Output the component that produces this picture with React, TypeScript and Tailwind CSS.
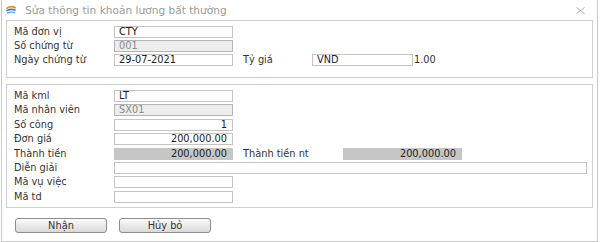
import React from 'react'

const font = { fontFamily: '"DejaVu Sans", Verdana, sans-serif' }

function Field({
  value,
  disabled,
  right,
  gray,
  className = 'w-[119px]',
}: {
  value?: string
  disabled?: boolean
  right?: boolean
  gray?: boolean
  className?: string
}) {
  const tone = gray
    ? 'bg-[#c6c6c6] border-[#c6c6c6] text-[#222]'
    : disabled
      ? 'bg-[#ededed] border-[#b4b4b4] text-[#8a8a8a]'
      : 'bg-white border-[#c4c4c4] text-[#222]'
  return (
    <div
      className={`h-[12px] border flex items-center pl-[4px] pr-[5px] text-[9.8px] leading-none ${tone} ${right ? 'justify-end' : ''} ${className}`}
    >
      {value}
    </div>
  )
}

function Row({ label, children }: { label: string; children: React.ReactNode }) {
  return (
    <div className="flex items-center h-[12px]">
      <span className="w-[100px] shrink-0 text-[9.8px] text-[#333] leading-none">{label}</span>
      {children}
    </div>
  )
}

function Side({ label, width, children }: { label: string; width: string; children: React.ReactNode }) {
  return (
    <>
      <span className="w-[10px] shrink-0" />
      <span className={`${width} shrink-0 text-[9.8px] text-[#333] leading-none`}>{label}</span>
      {children}
    </>
  )
}

function Btn({ label }: { label: string }) {
  return (
    <button className="w-[92px] h-[15px] rounded-[3px] border border-[#8e8e8e] bg-gradient-to-b from-[#fbfbfb] to-[#d9d9d9] text-[9.8px] text-[#333] leading-none">
      {label}
    </button>
  )
}

export default function App() {
  return (
    <div className="w-[600px] h-[242px] bg-white" style={font}>
      <div className="ml-[1px] w-[597px] h-[242px] border border-t-0 border-[#c9c9c9] flex flex-col">
        {/* Title bar */}
        <div className="h-[20px] shrink-0 flex items-center pl-[4px] pr-[12px]">
          <svg width="10" height="10" viewBox="0 0 10 10" className="mr-[9px]">
            <path d="M1 3.2 Q5 0.5 9 2.6" stroke="#f08a24" strokeWidth="1.8" fill="none" strokeLinecap="round" />
            <path d="M1 5.6 Q5 3.6 9 5" stroke="#2d7fd0" strokeWidth="1.6" fill="none" strokeLinecap="round" />
            <path d="M1.5 8 Q5 6.4 8.5 7.6" stroke="#5aa8e6" strokeWidth="1.4" fill="none" strokeLinecap="round" />
          </svg>
          <span className="text-[10.6px] text-[#9a9a9a] leading-none">Sửa thông tin khoản lương bất thường</span>
          <span className="flex-1" />
          <svg width="9" height="7" viewBox="0 0 9 7">
            <path d="M0.5 0.5 L8.5 6.5 M8.5 0.5 L0.5 6.5" stroke="#a8a8a8" strokeWidth="0.9" />
          </svg>
        </div>

        <div className="flex-1 flex flex-col px-[4px]">
          {/* Panel 1 */}
          <div className="h-[58px] border border-[#cfcfcf] pt-[5px] pl-[7px] flex flex-col gap-[2px]">
            <Row label="Mã đơn vị">
              <Field value="CTY" />
            </Row>
            <Row label="Số chứng từ">
              <Field value="001" disabled />
            </Row>
            <Row label="Ngày chứng từ">
              <Field value="29-07-2021" />
              <Side label="Tỷ giá" width="w-[69px]">
                <Field value="VND" className="w-[101px]" />
                <span className="ml-[1px] text-[9.8px] text-[#333] leading-none">1.00</span>
              </Side>
            </Row>
          </div>

          {/* Panel 2 */}
          <div className="mt-[6px] h-[124px] border border-[#cfcfcf] pt-[5px] pl-[7px] pr-[5px] flex flex-col gap-[2.4px]">
            <Row label="Mã kml">
              <Field value="LT" />
            </Row>
            <Row label="Mã nhân viên">
              <Field value="SX01" disabled />
            </Row>
            <Row label="Số công">
              <Field value="1" right />
            </Row>
            <Row label="Đơn giá">
              <Field value="200,000.00" right />
            </Row>
            <Row label="Thành tiền">
              <Field value="200,000.00" right gray />
              <Side label="Thành tiền nt" width="w-[100px]">
                <Field value="200,000.00" right gray className="w-[119px]" />
              </Side>
            </Row>
            <Row label="Diễn giải">
              <Field className="flex-1" />
            </Row>
            <Row label="Mã vụ việc">
              <Field />
            </Row>
            <Row label="Mã td">
              <Field />
            </Row>
          </div>

          {/* Buttons */}
          <div className="mt-[10px] flex gap-[12px] pl-[9px]">
            <Btn label="Nhận" />
            <Btn label="Hủy bỏ" />
          </div>
        </div>
      </div>
    </div>
  )
}
